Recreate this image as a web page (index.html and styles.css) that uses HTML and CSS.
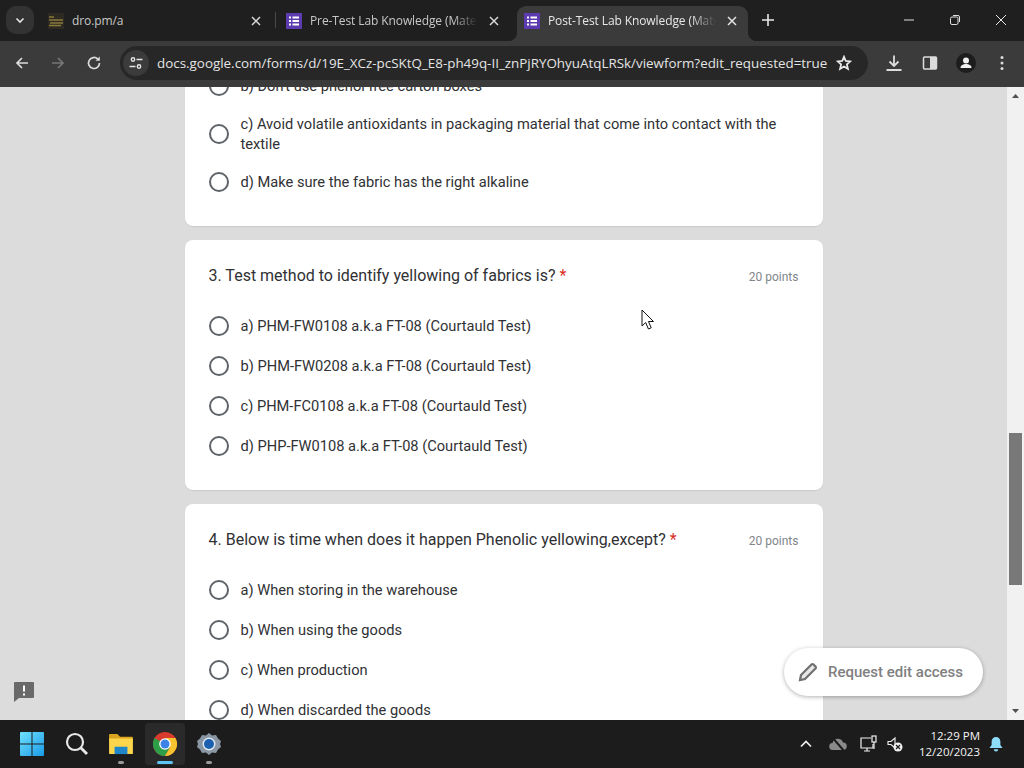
FILE: index.html
```html
<!DOCTYPE html>
<html lang="en">
<head>
    <meta charset="UTF-8">
    <meta name="viewport" content="width=device-width, initial-scale=1.0">
    <title>Post-Test Lab Knowledge</title>
    <link rel="stylesheet" href="styles.css">
</head>
<body>

    <!-- Tab strip -->
    <div class="tabstrip">
        <button class="tab-search">
            <svg width="12" height="12" viewBox="0 0 12 12"><path d="M2.500 4.500 6 8l3.500-3.500" fill="none" stroke="#e4e4e4" stroke-width="1.600"/></svg>
        </button>
        <div class="tab tab-first">
            <svg class="favicon" width="16" height="16" viewBox="0 0 16 16"><rect width="16" height="16" fill="#2c2a22"/><path d="M1 4h5M1 7h14M2 10h13M1 12.500h12" stroke="#8a7a3a" stroke-width="1.300"/></svg>
            <span class="tab-title">dro.pm/a</span>
            <svg class="tab-close" width="10" height="10" viewBox="0 0 10 10"><path d="M1 1l8 8M9 1 1 9" stroke="#d8d8d8" stroke-width="1.500"/></svg>
        </div>
        <span class="tab-sep"></span>
        <div class="tab tab-second">
            <svg class="favicon" width="16" height="16" viewBox="0 0 16 16"><rect width="16" height="16" fill="#5c3bb0"/><path d="M3 4.500h2M6.500 4.500H13M3 8h2M6.500 8H13M3 11.500h2M6.500 11.500H13" stroke="#fff" stroke-width="1.800"/></svg>
            <span class="tab-title">Pre-Test Lab Knowledge (Material)</span>
            <svg class="tab-close" width="10" height="10" viewBox="0 0 10 10"><path d="M1 1l8 8M9 1 1 9" stroke="#d8d8d8" stroke-width="1.500"/></svg>
        </div>
        <div class="tab tab-active">
            <svg class="favicon" width="16" height="16" viewBox="0 0 16 16"><rect width="16" height="16" fill="#5c3bb0"/><path d="M3 4.500h2M6.500 4.500H13M3 8h2M6.500 8H13M3 11.500h2M6.500 11.500H13" stroke="#fff" stroke-width="1.800"/></svg>
            <span class="tab-title">Post-Test Lab Knowledge (Material)</span>
            <svg class="tab-close" width="10" height="10" viewBox="0 0 10 10"><path d="M1 1l8 8M9 1 1 9" stroke="#e4e4e4" stroke-width="1.500"/></svg>
        </div>
        <svg class="new-tab" width="12" height="12" viewBox="0 0 12 12"><path d="M6 0v12M0 6h12" stroke="#e8e8e8" stroke-width="1.600"/></svg>
        <div class="window-controls">
            <svg width="12" height="12" viewBox="0 0 12 12"><path d="M1 6h10" stroke="#e0e0e0"/></svg>
            <svg width="12" height="12" viewBox="0 0 12 12"><rect x="1.500" y="3" width="7.500" height="7.500" rx="1.500" fill="none" stroke="#e0e0e0"/><path d="M4 1.500h5a1.500 1.500 0 0 1 1.500 1.500v5" fill="none" stroke="#e0e0e0"/></svg>
            <svg width="12" height="12" viewBox="0 0 12 12"><path d="M1 1l10 10M11 1 1 11" stroke="#e8e8e8"/></svg>
        </div>
    </div>

    <!-- Toolbar -->
    <div class="toolbar">
        <div class="nav-buttons">
            <svg width="16" height="16" viewBox="0 0 16 16"><path d="M14 8H3M8 3 3 8l5 5" fill="none" stroke="#dcdcdc" stroke-width="1.700"/></svg>
            <svg width="16" height="16" viewBox="0 0 16 16"><path d="M2 8h11M8 3l5 5-5 5" fill="none" stroke="#777" stroke-width="1.700"/></svg>
            <svg width="16" height="16" viewBox="0 0 16 16"><path d="M13.500 8A5.500 5.500 0 1 1 11.800 4" fill="none" stroke="#dcdcdc" stroke-width="1.700"/><path d="M13.800 1.500v4.300H9.500z" fill="#dcdcdc"/></svg>
        </div>
        <div class="omnibox">
            <span class="site-info">
                <svg width="14" height="14" viewBox="0 0 14 14" fill="none" stroke="#e4e4e4" stroke-width="1.400"><circle cx="4" cy="3.500" r="1.700"/><path d="M7.500 3.500h6M.5 10.500h6"/><circle cx="10" cy="10.500" r="1.700"/></svg>
            </span>
            <span class="url">docs.google.com/forms/d/19E_XCz-pcSKtQ_E8-ph49q-II_znPjRYOhyuAtqLRSk/viewform?edit_requested=true</span>
            <svg width="16" height="16" viewBox="0 0 16 16"><path d="m8 1.800 1.800 4.200 4.500.4-3.400 3 1 4.400L8 11.500l-3.900 2.300 1-4.400-3.400-3 4.500-.4z" fill="none" stroke="#e8e8e8" stroke-width="1.800"/></svg>
        </div>
        <div class="toolbar-actions">
            <svg width="18" height="18" viewBox="0 0 18 18"><path d="M9 1.500v10M4.500 7.500 9 12l4.500-4.500M1.500 16h15" fill="none" stroke="#dcdcdc" stroke-width="1.800"/></svg>
            <svg width="16" height="16" viewBox="0 0 16 16"><rect x="1.500" y="2" width="13" height="12" rx="1" fill="none" stroke="#dcdcdc" stroke-width="1.500"/><rect x="8" y="2" width="6.500" height="12" fill="#dcdcdc"/></svg>
            <svg width="20" height="20" viewBox="0 0 20 20"><circle cx="10" cy="10" r="10" fill="#1d1d1d"/><circle cx="10" cy="7.500" r="3" fill="#f0f0f0"/><path d="M4.500 15c0-3 3-4 5.500-4s5.500 1 5.500 4z" fill="#f0f0f0"/></svg>
            <svg width="16" height="16" viewBox="0 0 16 16"><circle cx="8" cy="2.500" r="1.500" fill="#dcdcdc"/><circle cx="8" cy="8" r="1.500" fill="#dcdcdc"/><circle cx="8" cy="13.500" r="1.500" fill="#dcdcdc"/></svg>
        </div>
    </div>

    <!-- Page area -->
    <div class="viewport">
        <div class="page">
            <div class="form-list">

                <div class="card card-cut">
                    <label class="option"><span class="radio"></span><span class="option-text">b) Don't use phenol free carton boxes</span></label>
                    <label class="option"><span class="radio"></span><span class="option-text">c) Avoid volatile antioxidants in packaging material that come into contact with the textile</span></label>
                    <label class="option"><span class="radio"></span><span class="option-text">d) Make sure the fabric has the right alkaline</span></label>
                </div>

                <div class="card">
                    <div class="question">
                        <span class="question-text">3. Test method to identify yellowing of fabrics is? <span class="required">*</span></span>
                        <span class="points">20 points</span>
                    </div>
                    <label class="option"><span class="radio"></span><span class="option-text">a) PHM-FW0108 a.k.a FT-08 (Courtauld Test)</span></label>
                    <label class="option"><span class="radio"></span><span class="option-text">b) PHM-FW0208 a.k.a FT-08 (Courtauld Test)</span></label>
                    <label class="option"><span class="radio"></span><span class="option-text">c) PHM-FC0108 a.k.a FT-08 (Courtauld Test)</span></label>
                    <label class="option"><span class="radio"></span><span class="option-text">d) PHP-FW0108 a.k.a FT-08 (Courtauld Test)</span></label>
                </div>

                <div class="card">
                    <div class="question">
                        <span class="question-text">4. Below is time when does it happen Phenolic yellowing,except? <span class="required">*</span></span>
                        <span class="points">20 points</span>
                    </div>
                    <label class="option"><span class="radio"></span><span class="option-text">a) When storing in the warehouse</span></label>
                    <label class="option"><span class="radio"></span><span class="option-text">b) When using the goods</span></label>
                    <label class="option"><span class="radio"></span><span class="option-text">c) When production</span></label>
                    <label class="option"><span class="radio"></span><span class="option-text">d) When discarded the goods</span></label>
                </div>

            </div>

            <svg class="report-icon" width="20" height="20" viewBox="0 0 20 20"><path d="M1 0h18a1 1 0 0 1 1 1v14a1 1 0 0 1-1 1H5l-5 4V1a1 1 0 0 1 1-1z" fill="#696969"/><path d="M10 3.500v6M10 11.500v2" stroke="#fff" stroke-width="2"/></svg>

            <svg class="cursor" width="13" height="21" viewBox="0 0 13 21"><path d="M1 1v16l3.700-3.500 2.700 6.500 2.800-1.200-2.700-6.300h5z" fill="#fff" stroke="#111" stroke-width="1"/></svg>

            <div class="edit-access">
                <svg width="20" height="20" viewBox="0 0 20 20"><path d="M2 18l1-5L13.500 2.500a1.400 1.400 0 0 1 2 0l2 2a1.400 1.400 0 0 1 0 2L7 17z" fill="#e6e6e6" stroke="#707070" stroke-width="2.200"/></svg>
                <span>Request edit access</span>
            </div>
        </div>

        <div class="scrollbar">
            <svg width="17" height="17" viewBox="0 0 17 17"><path d="M5 11l3.500-4 3.500 4z" fill="#505050"/></svg>
            <div class="scroll-track"><div class="scroll-thumb"></div></div>
            <svg width="17" height="17" viewBox="0 0 17 17"><path d="M5 6l3.500 4 3.500-4z" fill="#505050"/></svg>
        </div>
    </div>

    <!-- Windows taskbar -->
    <div class="taskbar">
        <div class="task-apps">
            <div class="task-start">
                <svg width="24" height="24" viewBox="0 0 24 24"><defs><linearGradient id="winBlue" x1="0" y1="0" x2="1" y2="1"><stop offset="0" stop-color="#6fe0fb"/><stop offset="1" stop-color="#1a9be8"/></linearGradient></defs><path d="M0 1a1 1 0 0 1 1-1h10.500v11.500H0zM12.500 0H23a1 1 0 0 1 1 1v10.500H12.500zM0 12.500h11.500V24H1a1 1 0 0 1-1-1zM12.500 12.500H24V23a1 1 0 0 1-1 1H12.500z" fill="url(#winBlue)"/></svg>
            </div>
            <div class="task-app">
                <svg width="24" height="24" viewBox="0 0 24 24"><circle cx="10" cy="10" r="8" fill="none" stroke="#e8e8e8" stroke-width="2.200"/><path d="M16 16l6 6" stroke="#e8e8e8" stroke-width="2.800"/></svg>
            </div>
            <div class="task-app task-open">
                <svg width="24" height="22" viewBox="0 0 26 24"><path d="M0 2a1 1 0 0 1 1-1h8l3 3h13a1 1 0 0 1 1 1v4H0z" fill="#d9a520"/><path d="M0 6h25a1 1 0 0 1 1 1v15a1 1 0 0 1-1 1H1a1 1 0 0 1-1-1z" fill="#fbd54b"/><rect x="6" y="15" width="14" height="8" fill="#1f86c9"/></svg>
            </div>
            <div class="task-app task-open task-active">
                <svg width="24" height="24" viewBox="0 0 24 24"><circle cx="12" cy="12" r="12" fill="#d93a2e"/><path d="M12 12 1.600 6A12 12 0 0 0 12 24l6-10.500z" fill="#2e9e48"/><path d="M12 6h10.400A12 12 0 0 1 12 24l5.200-9z" fill="#f6c42e"/><circle cx="12" cy="12" r="5.800" fill="#fff"/><circle cx="12" cy="12" r="4.500" fill="#3d83e6"/></svg>
            </div>
            <div class="task-app task-open">
                <svg width="24" height="24" viewBox="0 0 24 24"><path d="M12 1l3 2.500 4-.5 2 3.500 3 2.500-1 3 1 3-3 2.500-2 3.500-4-.5-3 2.500-3-2.500-4 .5-2-3.500-3-2.500 1-3-1-3 3-2.500 2-3.500 4 .5z" fill="#8a96a3"/><circle cx="12" cy="12" r="6.500" fill="#dfe8f0"/><circle cx="12" cy="12" r="5" fill="#1c5fae"/></svg>
            </div>
        </div>
        <div class="tray">
            <svg class="tray-chevron" width="14" height="14" viewBox="0 0 14 14"><path d="M2 9.500 7 4.500l5 5" fill="none" stroke="#f0f0f0" stroke-width="1.700"/></svg>
            <svg class="tray-cloud" width="18" height="14" viewBox="0 0 18 14"><path d="M4 13a3.500 3.500 0 0 1-.5-7A5.500 5.500 0 0 1 14 5.500a3.700 3.700 0 0 1 0 7.500z" fill="#8a8a8a"/><path d="M3 0l12 14" stroke="#1c1c1c" stroke-width="2"/></svg>
            <svg class="tray-net" width="18" height="18" viewBox="0 0 18 18" fill="none" stroke="#f0f0f0" stroke-width="1.200"><path d="M11 3H1v10h12V9M4 16h6M7 13v3"/><rect x="12" y="1" width="4" height="6"/><path d="M14 7v7"/></svg>
            <svg class="tray-sound" width="16" height="16" viewBox="0 0 16 16"><path d="M1 5.500h3L8 2v10L4 8.500H1z" fill="none" stroke="#f0f0f0" stroke-width="1.100"/><circle cx="11" cy="11" r="4.500" fill="#f0f0f0"/><path d="M9 9l4 4M13 9l-4 4" stroke="#1c1c1c" stroke-width="1.200"/></svg>
            <div class="clock">
                <span>12:29 PM</span>
                <span>12/20/2023</span>
            </div>
            <svg class="tray-bell" width="14" height="16" viewBox="0 0 16 18"><path d="M8 1a5 5 0 0 1 5 5v4l2.500 3.500H.5L3 10V6a5 5 0 0 1 5-5z" fill="#8fdcf8"/><path d="M5.500 15h5a2.500 2.500 0 0 1-5 0z" fill="#8fdcf8"/></svg>
        </div>
    </div>

</body>
</html>
```

FILE: styles.css
```css
/* Reset styles */
* {
    margin: 0;
    padding: 0;
    box-sizing: border-box;
}

html, body {
    height: 100%;
}

body {
    display: flex;
    flex-direction: column;
    overflow: hidden;
    font-family: 'Roboto', sans-serif;
    background-color: #1c1c1c;
}

/* Tab strip */
.tabstrip {
    display: flex;
    align-items: flex-end;
    height: 41px;
    padding-left: 6px;
    background-color: #1f1f1f;
    font-family: 'Open Sans', sans-serif;
    flex-shrink: 0;
}

.tab-search {
    display: flex;
    align-items: center;
    justify-content: center;
    align-self: flex-start;
    width: 28px;
    height: 28px;
    margin-top: 6px;
    border: none;
    border-radius: 10px;
    background-color: #333333;
}

.tab {
    display: flex;
    align-items: center;
    height: 35px;
    padding-bottom: 6px;
    color: #c8c8c8;
    font-size: 12px;
    letter-spacing: -0.1px;
}

.tab-first {
    width: 234px;
    margin-left: 7px;
    padding-left: 7px;
    padding-right: 14px;
}

.tab-second {
    width: 241px;
    padding-left: 10px;
    padding-right: 18px;
}

.tab-sep {
    align-self: flex-start;
    width: 1px;
    height: 16px;
    margin-top: 12px;
    background-color: #4a4a4a;
}

.favicon {
    flex-shrink: 0;
    margin-right: 8px;
}

.tab-title {
    flex: 1;
    min-width: 0;
    overflow: hidden;
    white-space: nowrap;
    -webkit-mask-image: linear-gradient(to right, #000 85%, transparent 100%);
    mask-image: linear-gradient(to right, #000 85%, transparent 100%);
}

.tab-first .tab-title {
    -webkit-mask-image: none;
    mask-image: none;
}

.tab-close {
    flex-shrink: 0;
    margin-left: 11px;
}

.tab-active {
    position: relative;
    width: 231px;
    padding-left: 7px;
    padding-right: 11px;
    border-radius: 9px 9px 0 0;
    background-color: #3b3b3b;
    color: #e8e8e8;
}

/* little curves at the foot of the active tab */
.tab-active::before, .tab-active::after {
    content: '';
    position: absolute;
    bottom: 0;
    width: 9px;
    height: 9px;
}

.tab-active::before {
    left: -9px;
    background: radial-gradient(circle at 0 0, transparent 9px, #3b3b3b 9.500px);
}

.tab-active::after {
    right: -9px;
    background: radial-gradient(circle at 100% 0, transparent 9px, #3b3b3b 9.500px);
}

.new-tab {
    align-self: flex-start;
    margin: 14px 0 0 14px;
}

.window-controls {
    display: flex;
    align-self: flex-start;
    gap: 34px;
    margin: 14px 17px 0 auto;
}

/* Toolbar */
.toolbar {
    display: flex;
    align-items: center;
    height: 46px;
    padding-bottom: 2px;
    background-color: #3b3b3b;
    flex-shrink: 0;
}

.nav-buttons {
    display: flex;
    gap: 20px;
    margin-left: 14px;
}

.omnibox {
    display: flex;
    align-items: center;
    width: 748px;
    height: 34px;
    margin-left: 18px;
    padding-right: 16px;
    border-radius: 17px;
    background-color: #272727;
    color: #e4e4e4;
    font-family: 'Open Sans', sans-serif;
    font-size: 13.400px;
}

.site-info {
    display: flex;
    align-items: center;
    justify-content: center;
    width: 26px;
    height: 26px;
    margin-left: 3px;
    border-radius: 50%;
    background-color: #3b3b3b;
}

.url {
    flex: 1;
    min-width: 0;
    margin-left: 8px;
    white-space: nowrap;
}

.toolbar-actions {
    display: grid;
    grid-template-columns: repeat(4, 36px);
    justify-items: center;
    align-items: center;
    margin-left: 8px;
}

/* Page area */
.viewport {
    display: flex;
    flex: 1;
    min-height: 0;
}

.page {
    position: relative;
    flex: 1;
    overflow: hidden;
    background-color: #dcdcdc;
}

.scrollbar {
    display: flex;
    flex-direction: column;
    width: 17px;
    background-color: #f1f1f1;
}

.scroll-track {
    flex: 1;
}

.scroll-thumb {
    width: 13px;
    height: 152px;
    margin: 329px 0 0 2px;
    background-color: #787878;
}

/* Form cards */
.form-list {
    display: flex;
    flex-direction: column;
    gap: 14px;
    width: 638px;
    margin: -21px auto 0;
}

.card {
    padding: 24px;
    border-radius: 8px;
    background-color: #ffffff;
    box-shadow: 0 1px 1px rgba(0, 0, 0, 0.08);
}

.card-cut {
    padding-top: 0;
    border-radius: 0 0 8px 8px;
}

.question {
    display: flex;
    justify-content: space-between;
    height: 24px;
    margin-bottom: 18px;
}

.question-text {
    margin-top: 2px;
    font-size: 16px;
    color: #303134;
}

.required {
    color: #d93025;
}

.points {
    margin-top: 6px;
    font-size: 12px;
    color: #80868b;
}

.option {
    display: flex;
    align-items: center;
    gap: 12px;
    min-height: 40px;
    padding: 8px 0;
    font-size: 14.650px;
    line-height: 20px;
    color: #303134;
}

.radio {
    flex-shrink: 0;
    width: 20px;
    height: 20px;
    border: 2px solid #5f6368;
    border-radius: 50%;
}

/* Things lying over the page */
.report-icon {
    position: absolute;
    left: 14px;
    bottom: 18px;
}

.cursor {
    position: absolute;
    left: 641px;
    top: 222px;
}

.edit-access {
    position: absolute;
    left: 784px;
    top: 561px;
    display: flex;
    align-items: center;
    gap: 10px;
    width: 199px;
    height: 48px;
    padding-left: 14px;
    border-radius: 24px;
    background-color: #ffffff;
    box-shadow: 0 1px 4px rgba(0, 0, 0, 0.3);
    color: #808080;
    font-size: 15px;
    font-weight: 500;
}

/* Taskbar */
.taskbar {
    display: flex;
    justify-content: space-between;
    align-items: center;
    height: 48px;
    padding: 0 21px 0 20px;
    background-color: #1c1c1c;
    flex-shrink: 0;
}

.task-apps {
    display: flex;
    align-items: center;
    gap: 4px;
}

.task-start {
    display: flex;
    margin-right: 9px;
}

.task-app {
    position: relative;
    display: flex;
    align-items: center;
    justify-content: center;
    width: 40px;
    height: 42px;
}

.task-open::after {
    content: '';
    position: absolute;
    left: 17px;
    bottom: 1px;
    width: 6px;
    height: 3px;
    border-radius: 2px;
    background-color: #9a9a9a;
}

.task-active {
    border-radius: 4px;
    background-color: #2a2a2a;
}

.task-active::after {
    left: 12px;
    width: 16px;
    background-color: #5cc5f5;
}

.tray {
    display: flex;
    align-items: center;
}

.tray-cloud {
    margin-left: 16px;
}

.tray-net {
    margin-left: 13px;
}

.tray-sound {
    margin-left: 9px;
}

.clock {
    display: flex;
    flex-direction: column;
    align-items: flex-end;
    margin-left: 16px;
    color: #f4f4f4;
    font-family: 'Open Sans', sans-serif;
    font-size: 11.500px;
    line-height: 16px;
}

.tray-bell {
    margin-left: 9px;
}
```
